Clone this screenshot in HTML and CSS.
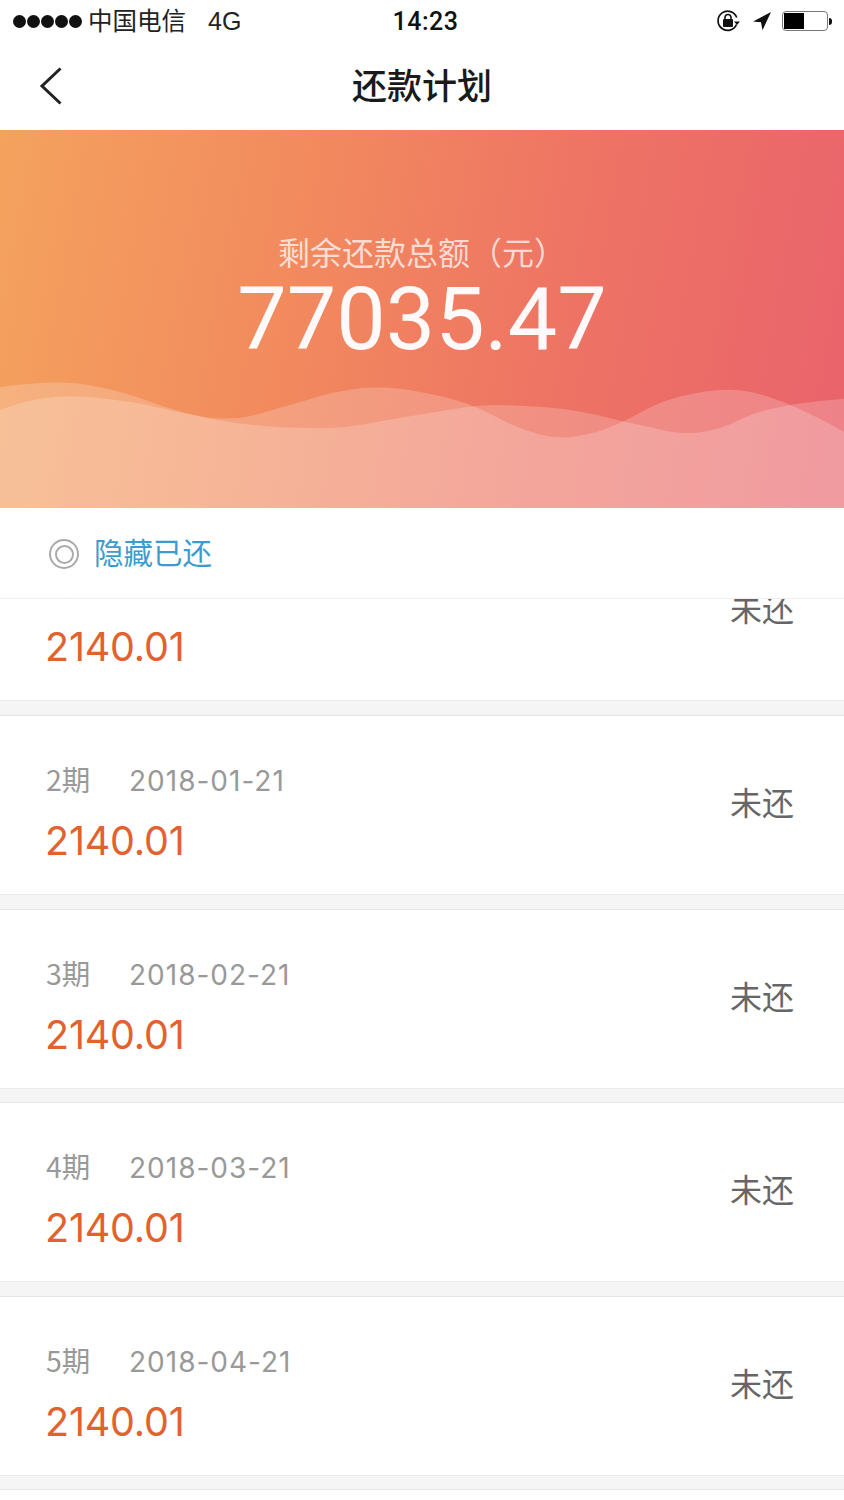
FILE: index.html
```html
<!DOCTYPE html>
<html lang="zh-CN">
<head>
<meta charset="utf-8">
<title>还款计划</title>
<link rel="stylesheet" href="styles.css">
</head>
<body>
<div class="page">
  <header class="status">
    <div class="status-left">
      <span class="dots"><i></i><i></i><i></i><i></i><i></i></span>
      <span class="carrier">中国电信</span>
      <span class="net">4G</span>
    </div>
    <div class="time">14:23</div>
    <div class="status-right">
      <svg class="ic-lock" viewBox="0 0 26 24" width="26" height="24">
        <path d="M20.5 15.5A9.6 9.6 0 1 1 20.7 8.5" fill="none" stroke="#111" stroke-width="1.7"/>
        <path d="M18 12.5h6l-3 3.4z" fill="#111"/>
        <rect x="7" y="10" width="10" height="8" rx="1" fill="#111"/>
        <path d="M9 10.500V8.500a3 3 0 0 1 6 0v2" fill="none" stroke="#111" stroke-width="1.600"/>
      </svg>
      <svg class="ic-loc" viewBox="0 0 20 20" width="20" height="20">
        <path d="M19 1 1 10.500l8 .8 1.500 8z" fill="#111"/>
      </svg>
      <div class="battery"><div class="battery-fill"></div></div>
      <div class="battery-tip"></div>
    </div>
  </header>

  <nav class="nav">
    <svg class="back" viewBox="0 0 26 40" width="26" height="40">
      <path d="M22.500 2.500 4 20l18.500 17.500" fill="none" stroke="#222" stroke-width="3"/>
    </svg>
    <h1 class="title">还款计划</h1>
  </nav>

  <section class="banner">
    <svg class="waves" viewBox="0 0 844 378" preserveAspectRatio="none">
      <path class="wave" d="M0 257Q59 249 88 255Q118 260 148 271Q178 282 204 287Q231 291 255 285Q280 278 307 270Q334 261 363 258Q393 256 420 262Q447 267 465 273Q484 280 500 289Q517 298 538 304Q560 310 578 306Q597 303 610 297Q624 292 645 280Q667 268 697 263Q727 257 751 262Q775 267 810 284Q827 292 844 302V378H0Z"/>
      <path class="wave" d="M0 280Q32 268 56 267Q81 265 108 269Q135 272 156 277Q178 282 202 287Q226 292 253 295Q280 298 312 298Q344 299 371 293Q398 288 436 282Q474 275 495 275Q517 275 543 277Q570 279 597 285Q624 292 654 298Q684 306 702 302Q721 299 737 291Q753 283 775 278Q797 273 820 271Q830 270 844 269V378H0Z"/>
    </svg>
    <p class="banner-label">剩余还款总额（元）</p>
    <p class="banner-amount">77035.47</p>
  </section>

  <div class="toggle">
    <span class="radio"><span class="radio-inner"></span></span>
    <span class="toggle-text">隐藏已还</span>
  </div>

  <main class="list">
    <div class="list-inner">
      <article class="row">
        <div class="row-main">
          <div class="row-meta"><span class="period">1期</span><span class="date">2017-12-21</span></div>
          <div class="amount">2140.01</div>
        </div>
        <div class="state">未还</div>
      </article>
      <div class="gap"></div>
      <article class="row">
        <div class="row-main">
          <div class="row-meta"><span class="period">2期</span><span class="date">2018-01-21</span></div>
          <div class="amount">2140.01</div>
        </div>
        <div class="state">未还</div>
      </article>
      <div class="gap"></div>
      <article class="row">
        <div class="row-main">
          <div class="row-meta"><span class="period">3期</span><span class="date">2018-02-21</span></div>
          <div class="amount">2140.01</div>
        </div>
        <div class="state">未还</div>
      </article>
      <div class="gap"></div>
      <article class="row">
        <div class="row-main">
          <div class="row-meta"><span class="period">4期</span><span class="date">2018-03-21</span></div>
          <div class="amount">2140.01</div>
        </div>
        <div class="state">未还</div>
      </article>
      <div class="gap"></div>
      <article class="row">
        <div class="row-main">
          <div class="row-meta"><span class="period">5期</span><span class="date">2018-04-21</span></div>
          <div class="amount">2140.01</div>
        </div>
        <div class="state">未还</div>
      </article>
      <div class="gap"></div>
    </div>
  </main>
</div>
</body>
</html>
```
FILE: styles.css
```css
* { box-sizing: border-box; }
html, body { margin: 0; padding: 0; background: #fff; }
body { font-family: "Liberation Sans", "Noto Sans CJK SC", sans-serif; }
.page { width: 844px; height: 1500px; overflow: hidden; display: flex; flex-direction: column; }

.status { height: 44px; flex: none; display: grid; grid-template-columns: 1fr auto 1fr; align-items: center; padding: 0 12px 2px 13px; color: #111; }
.status-left { display: flex; align-items: center; }
.dots { display: flex; gap: 1px; margin-right: 6px; }
.dots i { width: 13px; height: 13px; border-radius: 50%; background: #111; display: block; }
.carrier { font-size: 24.500px; line-height: 30px; padding-bottom: 2px; font-family: "Noto Sans CJK SC", sans-serif; color: #222; }
.net { font-size: 25px; line-height: 30px; margin-left: 22px; color: #222; }
.time { font-size: 25px; font-weight: 500; font-family: "Roboto", "Liberation Sans", sans-serif; padding-left: 6px; letter-spacing: .5px; }
.status-right { display: flex; align-items: center; justify-content: flex-end; }
.ic-lock { margin-right: 10px; }
.ic-loc { margin-right: 10px; }
.battery { width: 46px; height: 20px; border: 1.500px solid #777; border-radius: 4px; padding: 1px; background: #fff; }
.battery-fill { width: 20px; height: 100%; background: #000; }
.battery-tip { width: 3px; height: 7px; background: #111; border-radius: 0 3px 3px 0; margin-left: 1px; }

.nav { height: 86px; flex: none; display: flex; align-items: center; justify-content: center; position: relative; padding-bottom: 6px; }
.back { position: absolute; left: 38px; top: 22px; }
.title { margin: 0; font: 500 35px/44px "Noto Sans CJK SC", sans-serif; color: #1a1a1a; }

.banner { height: 378px; flex: none; position: relative; overflow: hidden; display: flex; flex-direction: column; align-items: center; padding-top: 100px; background: linear-gradient(100deg, #f4a25e 0%, #f28a5e 35%, #ee7464 65%, #e9636c 100%); }
.waves { position: absolute; left: 0; top: 0; width: 100%; height: 100%; }
.wave { fill: #fff; fill-opacity: .2; }
.banner-label { position: relative; margin: 0; font: 400 32px/42px "Noto Sans CJK SC", sans-serif; color: rgba(255,255,255,.72); }
.banner-amount { position: relative; margin: 3px 0 0; font: 400 88px/88px "Roboto", "Liberation Sans", sans-serif; color: rgba(255,255,255,.96); }

.toggle { height: 90px; flex: none; display: flex; align-items: center; padding: 2px 0 0 49px; }
.radio { width: 30px; height: 30px; border: 2px solid #aaa; border-radius: 50%; display: flex; align-items: center; justify-content: center; margin-right: 15px; }
.radio-inner { width: 19px; height: 19px; border: 2px solid #aaa; border-radius: 50%; }
.toggle-text { font: 400 29.500px/40px "Noto Sans CJK SC", sans-serif; color: #3b9ccf; padding-bottom: 6px; }

.list { flex: 1; overflow: hidden; border-top: 1px solid #eee; }
.list-inner { margin-top: -76.600px; }
.row { height: 178px; display: flex; justify-content: space-between; align-items: center; padding: 0 50px 0 46px; background: #fff; }
.row-main { align-self: flex-start; padding-top: 45px; }
.row-meta { height: 40px; display: flex; align-items: center; color: #999; font-size: 28.500px; }
.period { font-family: "Noto Sans CJK SC", sans-serif; width: 83px; line-height: 40px; padding-bottom: 4px; }
.date { font-family: "Inter", "Liberation Sans", sans-serif; font-size: 28px; letter-spacing: 1px; }
.amount { margin: 20px 0 0 -1px; font: 400 39.500px/40px "Inter", "Liberation Sans", sans-serif; color: #e2622f; letter-spacing: -.2px; }
.state { font: 400 32px/44px "Noto Sans CJK SC", sans-serif; color: #666; padding-bottom: 8px; }
.gap { height: 15.600px; background: #f5f5f5; border-top: 1px solid #ececec; border-bottom: 1px solid #e6e6e6; }
```
